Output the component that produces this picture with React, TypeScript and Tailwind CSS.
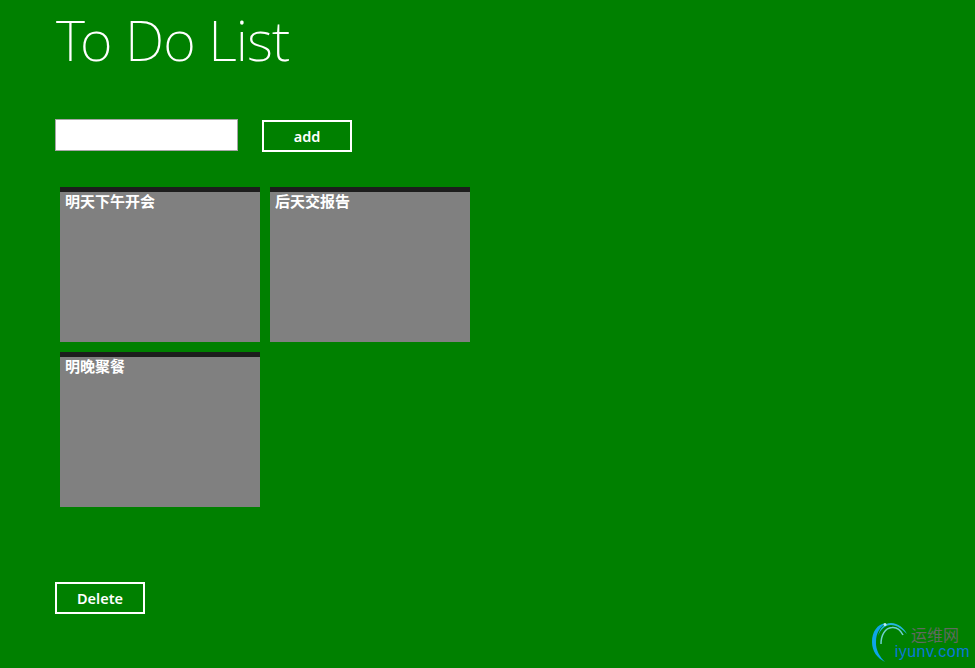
const cjk = "font-['Open_Sans','Noto_Sans_CJK_SC',sans-serif]";

const todos = ["明天下午开会", "后天交报告", "明晚聚餐"];

function ActionButton({ label }: { label: string }) {
  return (
    <button className="w-[90px] h-[32px] border-2 border-white text-[14.500px] font-semibold leading-none font-['Noto_Sans',sans-serif]">
      {label}
    </button>
  );
}

function Watermark() {
  return (
    <div className="absolute right-[5px] bottom-[6px] w-[99px] h-[40px] flex flex-col items-end gap-[2px] pt-[4px]">
      <svg className="absolute left-0 top-0" width="40" height="40" viewBox="0 0 40 40" fill="none">
        <path d="M15 1C6 2 1 10 1 20C1 29 6 36 14 40C9 35 4.500 28 5 20C5 11 9 5 15 1Z" fill="#0ea5e9" />
        <path d="M7 14C9 6 13 1 20 1C27 1 33 6 36 12C31 7 26 3 20 3C14 3 10 7 7 14Z" fill="#25b5e0" />
        <path d="M10 22C10 13 14 6 21 5.500C26 5 30 9 32 13" stroke="#6fd0d0" strokeWidth="1.500" />
        <circle cx="14" cy="2.500" r="1.500" fill="#bfeef0" />
      </svg>
      <span className="pr-[11px] text-[16px] leading-[16px] text-[#5f6b5f] font-['Noto_Sans_CJK_SC',sans-serif]">
        运维网
      </span>
      <span className="text-[16px] leading-[16px] tracking-[0.500px] text-[#0b78d8] font-['Liberation_Sans',sans-serif]">
        iyunv.com
      </span>
    </div>
  );
}

export default function App() {
  return (
    <div className={`relative w-[975px] h-[668px] overflow-hidden bg-[#008000] text-white pl-[55px] ${cjk}`}>
      <h1 className="h-[119px] pt-[4px] pl-px text-[56px] leading-[70px] font-extralight font-['Noto_Sans',sans-serif] tracking-[-1px]">
        To Do List
      </h1>

      <div className="flex items-start gap-[24px]">
        <input className="w-[183px] h-[32px] bg-white border border-[#a6a6a6]" />
        <div className="pt-px">
          <ActionButton label="add" />
        </div>
      </div>

      <div className="mt-[35px] ml-[5px] grid grid-cols-[200px_200px] gap-[10px] w-[410px]">
        {todos.map((todo) => (
          <div key={todo} className="h-[155px] bg-[#808080] border-t-[5px] border-[#1d1d1d] px-[5px] text-[15px] leading-[19px] font-bold">
            {todo}
          </div>
        ))}
      </div>

      <div className="mt-[75px]">
        <ActionButton label="Delete" />
      </div>

      <Watermark />
    </div>
  );
}
